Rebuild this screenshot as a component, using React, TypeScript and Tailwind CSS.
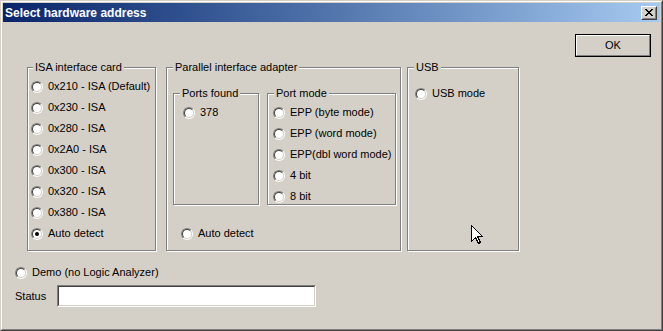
import React from 'react';

const Radio = ({ checked = false }: { checked?: boolean }) => (
  <span className="block w-[12px] h-[12px] shrink-0 rounded-full border border-t-[#808080] border-l-[#808080] border-b-white border-r-white">
    <span className="flex items-center justify-center w-full h-full rounded-full bg-white border border-t-[#404040] border-l-[#404040] border-b-[#d4d0c8] border-r-[#d4d0c8]">
      {checked && <span className="block w-[4px] h-[4px] rounded-full bg-black" />}
    </span>
  </span>
);

const Option = ({ label, checked }: { label: string; checked?: boolean }) => (
  <div className="flex items-center h-[21px] whitespace-nowrap">
    <Radio checked={checked} />
    <span className="ml-[5px]">{label}</span>
  </div>
);

interface GroupProps {
  title: string;
  className?: string;
  labelLeft?: string;
  children?: React.ReactNode;
}

const Group = ({ title, className = '', labelLeft = 'left-[6px]', children }: GroupProps) => (
  <div className={`relative shrink-0 border border-[#808080] shadow-[1px_1px_0_#ffffff,inset_1px_1px_0_#ffffff] ${className}`}>
    <span className={`absolute -top-[7px] ${labelLeft} px-[2px] bg-[#d4d0c8] leading-[13px] whitespace-nowrap`}>
      {title}
    </span>
    {children}
  </div>
);

// pixel pattern of the caption "x" glyph
const X_ROWS = ['11000011', '01100110', '00111100', '00011000', '00111100', '01100110', '11000011'];

const CloseButton = () => (
  <div className="w-[16px] h-[14px] bg-[#d4d0c8] border border-t-white border-l-white border-b-[#404040] border-r-[#404040]">
    <div className="w-full h-full flex items-center justify-center border border-t-[#d4d0c8] border-l-[#d4d0c8] border-b-[#808080] border-r-[#808080]">
      <svg width="8" height="7" viewBox="0 0 8 7" shapeRendering="crispEdges">
        {X_ROWS.map((row, y) =>
          row.split('').map((c, x) => (c === '1' ? <rect key={`${x}-${y}`} x={x} y={y} width="1" height="1" fill="#000" /> : null))
        )}
      </svg>
    </div>
  </div>
);

const Cursor = () => (
  <svg className="absolute left-[470px] top-[224px]" width="13" height="20" viewBox="0 0 13 20" shapeRendering="crispEdges">
    <path d="M0.5 0.5 L0.5 16.5 L4.5 12.5 L7.5 18.5 L9.5 17.5 L6.5 11.5 L11.5 11.5 Z" fill="#fff" stroke="#000" strokeWidth="1" />
  </svg>
);

export default function App() {
  return (
    <div className="relative w-[663px] h-[331px] border border-t-[#d4d0c8] border-l-[#d4d0c8] border-b-[#404040] border-r-[#404040] font-['Liberation_Sans',Arial,sans-serif] text-[11px] text-black">
      <div className="flex flex-col h-full p-[1px] bg-[#d4d0c8] border border-t-white border-l-white border-b-[#808080] border-r-[#808080]">
        {/* title bar */}
        <div className="flex items-center justify-between h-[19px] pl-[2px] pr-[3px] bg-linear-to-r from-[#0a246a] to-[#a6caf0]">
          <span className="text-white font-bold text-[12px]">Select hardware address</span>
          <CloseButton />
        </div>

        <div className="flex flex-col flex-1">
          <div className="flex justify-end pt-[12px] pr-[9px]">
            <div className="w-[76px] h-[23px] border border-black">
              <div className="flex items-center justify-center w-full h-full border border-t-white border-l-white border-b-[#808080] border-r-[#808080]">
                OK
              </div>
            </div>
          </div>

          <div className="flex items-start mt-[10px] pl-[24px]">
            <Group title="ISA interface card" labelLeft="left-[5px]" className="w-[129px] h-[184px] pl-[3px] pt-[8px]">
              <Option label="0x210 - ISA (Default)" />
              <Option label="0x230 - ISA" />
              <Option label="0x280 - ISA" />
              <Option label="0x2A0 - ISA" />
              <Option label="0x300 - ISA" />
              <Option label="0x320 - ISA" />
              <Option label="0x380 - ISA" />
              <Option label="Auto detect" checked />
            </Group>

            <Group title="Parallel interface adapter" className="ml-[10px] w-[235px] h-[184px] pt-[25px]">
              <div className="flex pl-[6px]">
                <Group title="Ports found" className="w-[86px] h-[112px] pl-[9px] pt-[8px]">
                  <Option label="378" />
                </Group>
                <Group title="Port mode" className="ml-[8px] w-[129px] h-[112px] pl-[5px] pt-[8px]">
                  <Option label="EPP (byte mode)" />
                  <Option label="EPP (word mode)" />
                  <Option label="EPP(dbl word mode)" />
                  <Option label="4 bit" />
                  <Option label="8 bit" />
                </Group>
              </div>
              <div className="mt-[18px] pl-[14px]">
                <Option label="Auto detect" />
              </div>
            </Group>

            <Group title="USB" className="ml-[6px] w-[112px] h-[184px] pl-[7px] pt-[15px]">
              <Option label="USB mode" />
            </Group>
          </div>

          <div className="mt-[11px] pl-[12px]">
            <Option label="Demo (no Logic Analyzer)" />
          </div>

          <div className="flex items-center mt-[2px] pl-[12px]">
            <span className="w-[42px]">Status</span>
            <div className="w-[259px] h-[22px] border border-t-[#808080] border-l-[#808080] border-b-white border-r-white">
              <div className="w-full h-full bg-white border border-t-[#404040] border-l-[#404040] border-b-[#d4d0c8] border-r-[#d4d0c8]" />
            </div>
          </div>
        </div>
      </div>
      <Cursor />
    </div>
  );
}
